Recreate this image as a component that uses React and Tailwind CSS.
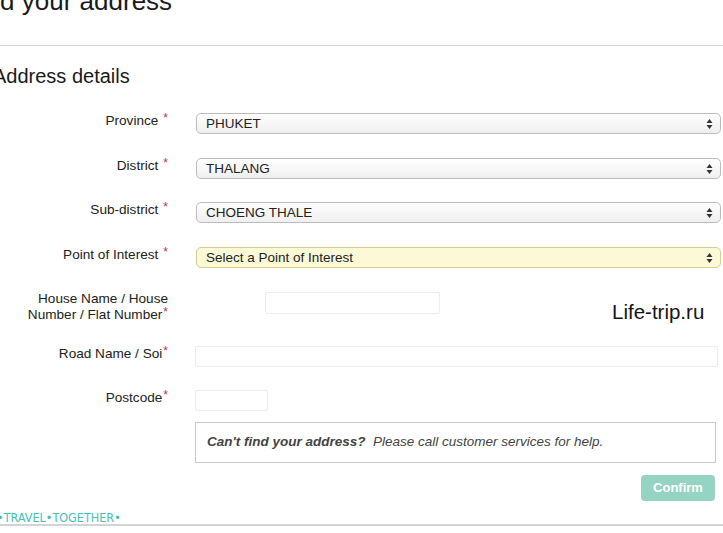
import React from "react";

const Star = ({ space = true }) => (
  <span className={"text-[#c8323f] text-[12px] relative top-[-3px] " + (space ? "ml-[5px]" : "ml-[1px]")}>*</span>
);

const Arrows = () => (
  <svg width="7" height="11" viewBox="0 0 7 11" className="absolute right-[7px] top-1/2 -translate-y-1/2">
    <path d="M3.5 0.5 L6.5 4.5 L0.5 4.5 Z" fill="#333" />
    <path d="M3.5 10.5 L6.5 6.5 L0.5 6.5 Z" fill="#333" />
  </svg>
);

const Select = ({ value, yellow }) => (
  <div
    className={
      "relative w-[525px] h-[21px] rounded-[5px] border flex items-center pl-[9px] pt-[1px] text-[13.5px] text-[#222] " +
      (yellow
        ? "bg-[#fcfad6] border-[#d4cd98]"
        : "bg-gradient-to-b from-white to-[#efefef] border-[#bcbcbc]")
    }
  >
    {value}
    <Arrows />
  </div>
);

const Label = ({ children, className = "" }) => (
  <div className={"w-[168px] text-right text-[13.6px] text-[#222] leading-[16px] " + className}>{children}</div>
);

export default function App() {
  return (
    <div
      className="relative w-[723px] h-[533px] overflow-hidden bg-white"
      style={{ fontFamily: '"Liberation Sans", Arial, sans-serif' }}
    >
      <div className="text-[26px] text-[#1a1a1a] mt-[-14px] ml-[-36px] whitespace-nowrap leading-[30px]">
        Find your address
      </div>
      <div className="mt-[29px] border-t border-[#d6d6d6]" />
      <div className="mt-[18px] ml-[-7px] text-[20px] text-[#1a1a1a] leading-[24px] whitespace-nowrap">
        Address details
      </div>

      <div className="mt-[25px] flex flex-col">
        <div className="flex items-start">
          <Label>Province<Star /></Label>
          <div className="ml-[28px]"><Select value="PHUKET" /></div>
        </div>
        <div className="flex items-start mt-[24px]">
          <Label>District<Star /></Label>
          <div className="ml-[28px]"><Select value="THALANG" /></div>
        </div>
        <div className="flex items-start mt-[23px]">
          <Label>Sub-district<Star /></Label>
          <div className="ml-[28px]"><Select value="CHOENG THALE" /></div>
        </div>
        <div className="flex items-start mt-[24px]">
          <Label>Point of Interest<Star /></Label>
          <div className="ml-[28px]"><Select value="Select a Point of Interest" yellow /></div>
        </div>

        <div className="flex items-start mt-[23px]">
          <Label>
            House Name / House
            <br />
            Number / Flat Number<Star space={false} />
          </Label>
          <div className="ml-[97px] mt-[1px] w-[175px] h-[22px] border border-[#ececec] rounded-[2px]" />
        </div>

        <div className="flex items-start mt-[23px]">
          <Label>Road Name / Soi<Star space={false} /></Label>
          <div className="ml-[27px] w-[523px] h-[21px] border border-[#ececec] rounded-[2px]" />
        </div>

        <div className="flex items-start mt-[23px]">
          <Label>Postcode<Star space={false} /></Label>
          <div className="ml-[27px] w-[73px] h-[21px] border border-[#ececec] rounded-[2px]" />
        </div>

        <div className="ml-[195px] mt-[11px] w-[521px] h-[41px] border border-[#c9c9c9] flex items-center pl-[11px] text-[13.5px] italic text-[#444]">
          <span className="font-bold">Can't find your address?</span>
          <span>&nbsp;&nbsp;Please call customer services for help.</span>
        </div>

        <div className="flex justify-end pr-[8px] mt-[12px]">
          <div className="w-[74px] h-[26px] rounded-[4px] bg-[#95d4c2] text-white font-bold text-[13px] flex items-center justify-center">
            Confirm
          </div>
        </div>
      </div>

      <div
        className="mt-[11px] ml-[-3px] text-[12.5px] leading-[12px] text-[#45c2b8] whitespace-nowrap"
        style={{ fontFamily: '"Liberation Sans Narrow", "DejaVu Sans Condensed", "Liberation Sans", sans-serif', fontWeight: 300 }}
      >
        •TRAVEL•TOGETHER•
      </div>
      <div className="mt-[0px] border-t-2 border-[#d4d4d4]" />

      <div className="absolute left-[612px] top-[300px] text-[20.5px] text-[#151515] leading-[24px]">
        Life-trip.ru
      </div>
    </div>
  );
}
